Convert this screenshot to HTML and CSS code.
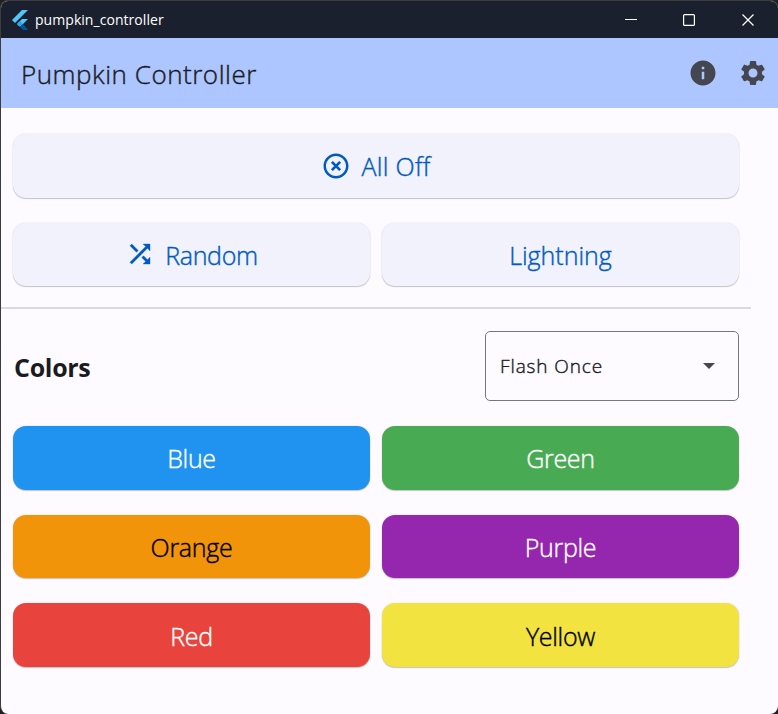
FILE: index.html
```html
<!DOCTYPE html>
<html lang="en">
<head>
<meta charset="utf-8">
<title>pumpkin_controller</title>
<link rel="stylesheet" href="styles.css">
</head>
<body>
<div class="window">
  <header class="titlebar">
    <svg class="logo" width="17" height="20" viewBox="0 0 17 20">
      <path fill="#54c5f8" d="M10 0h6L3 13 0 10z"/>
      <path fill="#54c5f8" d="M10 9h6l-5.200 5.200-4.200 1.800-1.600-2z"/>
      <path fill="#29a5e8" d="M5 14l3-3 3 3-3 3z"/>
      <path fill="#01579b" d="M8 17l3-3 5 6h-5z"/>
    </svg>
    <span class="window-name">pumpkin_controller</span>
    <svg class="controls" width="132" height="14" viewBox="0 0 132 14" fill="none" stroke="#fff" stroke-width="1.200">
      <path d="M0 6.500h12"/>
      <rect x="58.600" y="1.600" width="10.800" height="10.800" rx="1"/>
      <path d="M117.500 1.500l11 11M128.500 1.500l-11 11"/>
    </svg>
  </header>
  <div class="appbar">
    <h1 class="title">Pumpkin Controller</h1>
    <svg class="action" width="30" height="30" viewBox="0 0 24 24"><path d="M12 2C6.480 2 2 6.480 2 12s4.480 10 10 10 10-4.480 10-10S17.520 2 12 2zm1 15h-2v-6h2v6zm0-8h-2V7h2v2z"/></svg>
    <svg class="action" width="30" height="30" viewBox="0 0 24 24"><path d="M19.140 12.940c.04-.3.060-.61.060-.94 0-.32-.02-.64-.07-.94l2.030-1.580c.18-.14.230-.41.120-.61l-1.920-3.320c-.12-.22-.37-.29-.59-.22l-2.390.96c-.5-.38-1.030-.7-1.620-.94l-.36-2.540c-.04-.24-.24-.41-.48-.41h-3.840c-.24 0-.43.170-.47.410l-.36 2.540c-.59.240-1.130.570-1.620.940l-2.390-.96c-.22-.08-.47 0-.59.220L2.740 8.870c-.12.210-.08.470.120.610l2.030 1.580c-.05.300-.09.630-.09.940s.02.640.070.940l-2.030 1.580c-.18.140-.23.410-.12.610l1.920 3.320c.12.220.370.290.590.220l2.390-.96c.5.380 1.030.700 1.620.940l.36 2.540c.05.240.240.410.480.410h3.840c.24 0 .44-.17.470-.41l.36-2.540c.59-.24 1.130-.56 1.620-.94l2.390.96c.22.080.470 0 .59-.22l1.920-3.320c.12-.22.070-.47-.12-.61l-2.010-1.580zM12 15.600c-1.980 0-3.600-1.620-3.600-3.600s1.620-3.600 3.600-3.600 3.600 1.620 3.600 3.600-1.620 3.600-3.600 3.600z"/></svg>
  </div>
  <main class="content">
    <div class="row">
      <button class="btn"><svg width="30" height="30" viewBox="0 0 24 24"><path d="M12 2C6.470 2 2 6.470 2 12s4.470 10 10 10 10-4.470 10-10S17.530 2 12 2zm0 18c-4.410 0-8-3.590-8-8s3.590-8 8-8 8 3.590 8 8-3.590 8-8 8z"/><path d="M8.700 8.700l6.600 6.600M15.300 8.700l-6.600 6.600" stroke="currentColor" stroke-width="2.200"/></svg><span class="wide">All Off</span></button>
    </div>
    <div class="row">
      <button class="btn"><svg width="30" height="30" viewBox="0 0 24 24"><path stroke="currentColor" stroke-width=".3" d="M10.590 9.170L5.410 4 4 5.410l5.170 5.170 1.420-1.410zM14.500 4l2.040 2.040L4 18.590 5.410 20 17.960 7.460 20 9.500V4h-5.500zm.33 9.410l-1.410 1.410 3.130 3.130L14.500 20H20v-5.500l-2.040 2.040-3.130-3.130z"/></svg><span>Random</span></button>
      <button class="btn"><span class="lightning">Lightning</span></button>
    </div>
    <div class="divider"></div>
    <div class="section">
      <h2 class="heading">Colors</h2>
      <div class="select"><span>Flash Once</span><i class="caret"></i></div>
    </div>
    <div class="row">
      <button class="btn blue"><span>Blue</span></button>
      <button class="btn green"><span>Green</span></button>
    </div>
    <div class="row">
      <button class="btn orange"><span>Orange</span></button>
      <button class="btn purple"><span>Purple</span></button>
    </div>
    <div class="row">
      <button class="btn red"><span>Red</span></button>
      <button class="btn yellow"><span>Yellow</span></button>
    </div>
  </main>
</div>
</body>
</html>
```
FILE: styles.css
```css
* { box-sizing: border-box; }
body { margin: 0; background: #202020; font-family: "Open Sans", "Noto Sans", sans-serif; }
.window {
  width: 778px; height: 714px; overflow: hidden;
  border: solid #3c3c40; border-width: 1px 0 0 1px;
  border-radius: 8px; background: #fdfbff; color: #1b1b1f;
}
.titlebar { display: flex; align-items: center; height: 37px; padding: 0 21px 0 11px; background: #1b202e; color: #fff; }
.logo { margin-right: 6px; }
.window-name { flex: 1; font-size: 14px; line-height: 20px; letter-spacing: 0.05px; padding-top: 1px; }
.appbar { display: flex; align-items: center; height: 70px; padding: 0 10px 0 20px; background: #adc6ff; }
.title { flex: 1; margin: 0; padding-top: 1px; font-size: 26px; font-weight: 300; line-height: 36px; letter-spacing: .52px; -webkit-text-stroke: .4px; }
.action { fill: #44474f; }
.action + .action { margin-left: 20px; }
.content { padding: 26px 39px 0 12px; }
.row { display: flex; gap: 12px; margin-bottom: 25px; }
.btn {
  flex: 1; display: flex; align-items: center; justify-content: center; gap: 10px;
  height: 63.600px; padding: 0; border: 0; border-radius: 13px;
  background: #f1f2fc; color: #005ac1;
  box-shadow: 0 1px 1px rgba(0,0,0,.2), 0 0 2px rgba(0,0,0,.12);
  font: 300 25px/34px "Open Sans", "Noto Sans", sans-serif;
  letter-spacing: -.3px;
  -webkit-text-stroke: .4px;
}
.btn svg { fill: currentColor; }
.btn span { padding-top: 1px; }
.btn .wide { letter-spacing: .3px; }
.btn .lightning { letter-spacing: 0; }
.divider { height: 2px; margin: -4px -12px 22px; background: #d8dae2; }
.section { display: flex; align-items: center; justify-content: space-between; height: 70px; margin-bottom: 25px; }
.heading { margin: 0; padding-top: 1px; padding-left: 1px; font-size: 25px; font-weight: 700; line-height: 34px; letter-spacing: -.3px; }
.select {
  display: flex; align-items: center; justify-content: space-between;
  width: 254px; height: 70px; padding: 0 23px 0 14px;
  border: 1px solid #75777f; border-radius: 5px;
  font-size: 19px; font-weight: 300; letter-spacing: .9px; -webkit-text-stroke: .4px;
}
.caret { border: solid transparent; border-width: 6px 6px 0; border-top-color: #44474f; }
.blue { background: #2092f0; color: #fff; }
.green { background: #49aa54; color: #fff; }
.orange { background: #f2940a; color: #000; }
.purple { background: #9427ae; color: #fff; }
.red { background: #e8443d; color: #fff; }
.yellow { background: #f2e340; color: #000; }
```
